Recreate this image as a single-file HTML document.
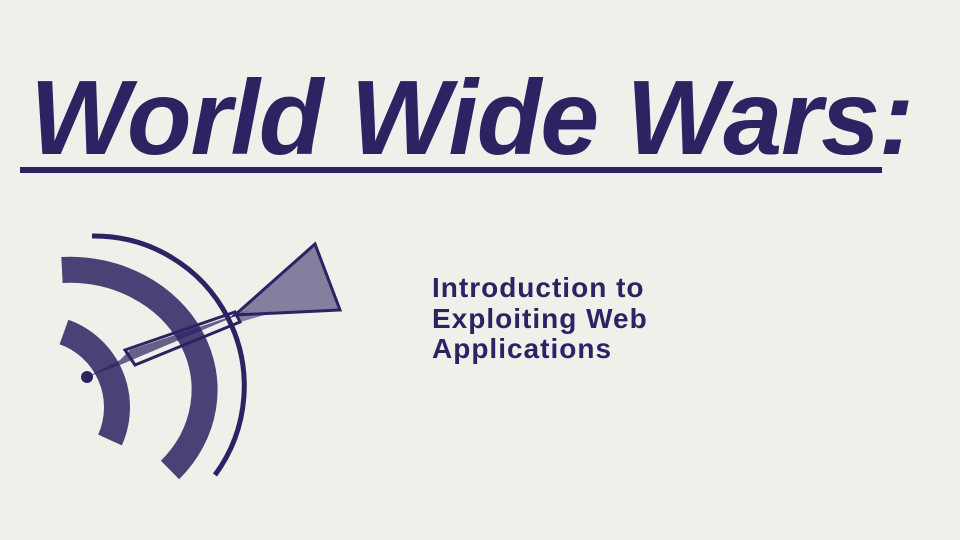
<!DOCTYPE html>
<html><head><style>
body{margin:0;width:960px;height:540px;background:#f0efe9;overflow:hidden;position:relative;font-family:"Liberation Sans",sans-serif;color:#2d2363}
.t{position:absolute;left:30px;top:58px;font-size:106px;font-weight:bold;font-style:italic;white-space:nowrap;letter-spacing:-1.2px}
.u{position:absolute;left:20px;top:167px;width:862px;height:6px;background:#2d2363}
.s{position:absolute;left:432px;top:273px;font-size:28px;font-weight:bold;line-height:30.5px;letter-spacing:1px}
</style></head><body>
<div class="t">World Wide Wars:</div>
<div class="u"></div>
<div class="s">Introduction to<br>Exploiting Web<br>Applications</div>
<svg style="position:absolute;left:0;top:0" width="400" height="540" viewBox="0 0 400 540">
<g fill="none" stroke="#2d2363">
<path d="M92 236 A150 150 0 0 1 215 475" stroke-width="5"/>
<path d="M62 270 A135 120 0 0 1 170 470" stroke-width="26" opacity="0.85"/>
<path d="M64 332 A80 80 0 0 1 110 440" stroke-width="26" opacity="0.85"/>
<circle cx="87" cy="377" r="6" fill="#2d2363" stroke="none"/>
</g>
<path d="M85 378 L120 360 L130 350 L220 320 L250 310 L120 365 Z" fill="#2d2363" opacity="0.7"/>
<path d="M125 350 L235 312 L240 322 L135 365 Z" fill="none" stroke="#2d2363" stroke-width="3"/>
<path d="M235 315 L315 244 L340 310 L275 312 L240 322 Z" fill="#2d2363" opacity="0.55"/>
<path d="M235 315 L315 244 L340 310 Z" fill="none" stroke="#2d2363" stroke-width="3"/>
</svg>
</body></html>
